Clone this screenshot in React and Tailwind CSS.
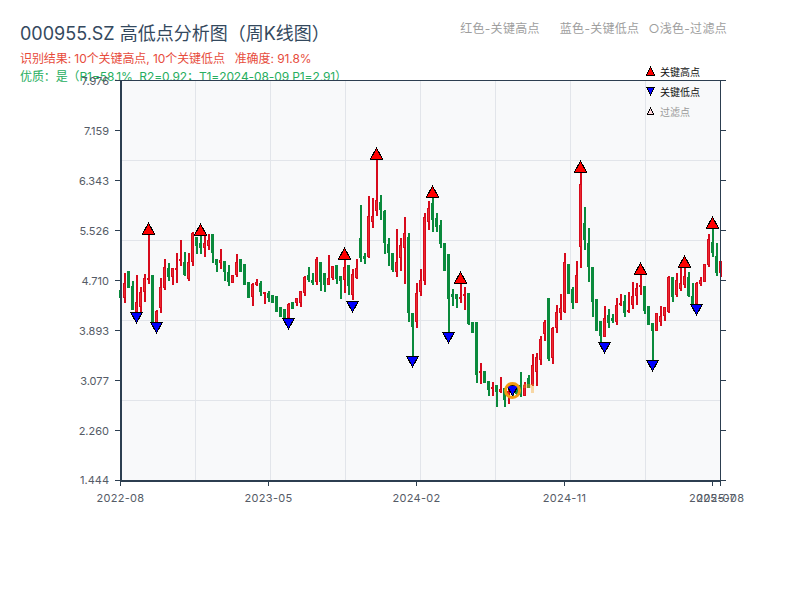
import React from 'react';

// Pixel y values read off the chart: [wickTop, wickBottom, bodyTop, bodyBottom, colour]
const CANDLES = [
  [290,298,290,298,'g'],[273,303,283,298,'r'],[271,288,271,288,'g'],[281,310,286,310,'g'],[275,312,302,312,'r'],
  [287,313,292,307,'r'],[274,302,278,292,'r'],[234,284,278,280,'r'],[275,322,275,322,'g'],[310,323,311,323,'r'],
  [278,313,287,308,'r'],[259,290,267,288,'r'],[263,281,268,277,'g'],[268,285,268,277,'r'],[253,283,268,270,'r'],
  [240,266,259,261,'r'],[252,276,262,275,'g'],[253,281,262,279,'r'],[232,266,233,262,'r'],[237,254,237,246,'g'],
  [235,254,243,248,'g'],[235,257,243,248,'r'],[234,250,240,246,'r'],[234,263,234,253,'g'],[259,272,259,265,'g'],
  [249,269,260,263,'r'],[261,281,261,272,'g'],[265,286,272,282,'g'],[275,283,275,283,'r'],[254,277,262,275,'r'],
  [259,272,259,272,'g'],[264,285,264,285,'g'],[282,298,282,298,'g'],[283,306,284,297,'r'],[279,286,282,285,'r'],
  [281,296,283,292,'g'],[292,304,292,293,'r'],[291,302,293,298,'g'],[295,303,295,303,'g'],[296,312,296,312,'g'],
  [307,317,307,317,'g'],[309,318,309,318,'g'],[303,322,304,318,'r'],[302,309,302,309,'g'],[298,306,298,303,'r'],
  [291,307,291,303,'r'],[276,296,277,293,'r'],[267,282,275,280,'g'],[273,285,280,283,'g'],[257,285,259,282,'r'],
  [262,291,262,282,'g'],[273,292,273,285,'g'],[255,285,278,285,'r'],[266,280,266,278,'r'],[265,284,265,279,'g'],
  [276,299,276,281,'g'],[258,293,267,280,'r'],[265,295,265,286,'g'],[269,300,274,295,'r'],[259,279,268,278,'r'],
  [205,262,238,258,'g'],[253,264,256,259,'g'],[196,258,216,257,'r'],[198,228,216,222,'r'],[160,216,200,211,'r'],
  [195,220,202,210,'g'],[210,254,211,243,'g'],[238,266,244,253,'g'],[253,272,253,270,'g'],[229,277,262,272,'r'],
  [238,271,245,258,'r'],[217,284,233,248,'r'],[233,322,237,313,'g'],[313,356,313,327,'g'],[283,328,293,322,'r'],
  [269,296,280,292,'r'],[213,285,217,281,'r'],[201,230,208,222,'r'],[197,232,203,220,'g'],[213,232,218,227,'g'],
  [220,248,225,244,'g'],[243,271,243,271,'g'],[254,332,254,299,'g'],[289,306,294,297,'g'],[294,308,294,299,'g'],
  [283,303,297,299,'r'],[287,310,294,296,'r'],[293,325,293,324,'g'],[322,333,322,333,'g'],[322,383,322,375,'g'],
  [363,384,371,373,'r'],[371,383,371,383,'g'],[381,396,381,390,'g'],[382,396,387,388,'r'],[385,407,385,392,'g'],
  [377,393,389,392,'r'],[388,407,388,400,'g'],[390,404,391,396,'r'],[385,396,388,394,'g'],[385,395,386,394,'g'],
  [372,397,385,395,'g'],[382,396,385,396,'r'],[375,388,378,388,'g'],[354,386,365,385,'r'],
  [353,386,357,372,'r'],[336,365,339,360,'r'],[320,341,322,334,'r'],[298,361,298,359,'g'],[327,364,328,358,'r'],
  [305,333,312,328,'r'],[294,320,308,313,'r'],[253,313,262,312,'r'],[264,294,264,294,'g'],[287,309,289,303,'g'],
  [261,303,275,303,'r'],[172,268,184,247,'r'],[207,250,223,240,'g'],[228,282,243,267,'g'],[267,317,267,302,'g'],
  [299,331,299,331,'g'],[321,342,321,336,'g'],[306,337,318,337,'r'],[309,328,315,323,'g'],[314,323,318,321,'g'],
  [298,325,305,322,'r'],[294,306,303,305,'r'],[295,317,301,313,'g'],[292,313,310,312,'r'],[282,309,296,305,'r'],
  [283,305,288,296,'r'],[274,295,285,287,'r'],[286,314,286,311,'g'],[306,325,306,325,'g'],[323,360,323,331,'g'],
  [313,331,313,331,'r'],[306,326,316,322,'r'],[307,321,307,316,'r'],[276,313,277,312,'r'],[277,302,277,297,'g'],
  [273,297,280,295,'r'],[267,291,283,289,'r'],[267,288,276,285,'r'],[272,297,277,296,'g'],[283,305,296,305,'g'],
  [282,305,283,304,'r'],[277,286,280,284,'r'],[264,282,264,282,'r'],[234,267,239,265,'r'],[228,257,242,253,'g'],
  [243,276,256,273,'g'],[261,277,261,273,'r'],
];

const PEAKS = [[148.5,234],[200.5,235],[344.5,259],[376.5,159],[432.5,197],[460.5,283],[580.5,172],[640.5,274],[684.5,267],[712.5,228]];
const LOWS = [[136.5,312],[156.5,322],[288.5,318],[352.5,301],[412.5,356],[448.5,332],[512.5,385],[604.5,342],[652.5,360],[696.5,304]];

const Y_LABELS = ['7.976','7.159','6.343','5.526','4.710','3.893','3.077','2.260','1.444'];
const X_LABELS = [[120.5,'2022-08'],[268.5,'2023-05'],[416.5,'2024-02'],[564.5,'2024-11'],[712.5,'2025-07'],[720.5,'2025-08']];
const V_GRID = [195,270,345,420,495,570,645];
const H_GRID = [160,240,320,400];

const AXIS = '#2c3e50';

function Candle({ c, i }) {
  const [top, bottom, bodyTop, bodyBottom, kind] = c;
  const x = 120 + 4 * i;
  const dark = kind === 'r' ? '#d70a1c' : '#0a8a3c';
  const core = kind === 'r' ? '#ea2a30' : '#0a8a3c';
  const h = Math.max(bodyBottom - bodyTop, 2);
  return (
    <g>
      <rect x={x} y={top} width={2} height={bottom - top} fill={dark} />
      <rect x={x - 1} y={bodyTop} width={3} height={h} fill={dark} />
      <rect x={x} y={bodyTop + 1} width={1} height={Math.max(h - 2, 0)} fill={core} />
    </g>
  );
}

function UpMark({ x, y, fill = '#ff0000', size = 6, h = 11 }) {
  return <polygon points={`${x - size},${y} ${x + size},${y} ${x},${y - h}`} fill={fill} stroke="#000" strokeWidth="1" shapeRendering="crispEdges" />;
}

function DownMark({ x, y, fill = '#0000ff', size = 6, h = 11 }) {
  return <polygon points={`${x - size},${y} ${x + size},${y} ${x},${y + h}`} fill={fill} stroke="#000" strokeWidth="1" shapeRendering="crispEdges" />;
}

function Chart() {
  return (
    <svg width="800" height="530" viewBox="0 0 800 530" className="block -mt-[90px] relative" style={{ fontFamily: 'Inter, "Noto Sans CJK SC", sans-serif' }}>
      <rect x="121" y="80" width="600" height="400" fill="#f8f9fa" />
      {V_GRID.map(x => <line key={x} x1={x + 0.5} x2={x + 0.5} y1="81" y2="480" stroke="#e2e5ea" />)}
      {H_GRID.map(y => <line key={y} x1="122" x2="720" y1={y + 0.5} y2={y + 0.5} stroke="#e2e5ea" />)}

      <g shapeRendering="crispEdges">
        {CANDLES.map((c, i) => <Candle key={i} c={c} i={i} />)}
        {/* faded filtered candle beside the marked low */}
        <rect x="523" y="384" width="11" height="4" fill="#f5a623" opacity="0.4" />
        <rect x="531" y="388" width="3" height="5" fill="#f5a623" opacity="0.4" />
      </g>

      {PEAKS.map(([x, y]) => <UpMark key={x} x={x} y={y} />)}
      {LOWS.map(([x, y]) => <DownMark key={x} x={x} y={y} />)}
      <circle cx="512.5" cy="390.5" r="7" fill="none" stroke="#f39c12" strokeWidth="3" />

      {/* axes */}
      <g shapeRendering="crispEdges">
        <rect x="120" y="80" width="2" height="402" fill={AXIS} />
        <rect x="120" y="480" width="601" height="2" fill={AXIS} />
        <rect x="120" y="80" width="606" height="1" fill={AXIS} />
        <rect x="720" y="80" width="1" height="402" fill={AXIS} />
        {Y_LABELS.map((_, i) => (
          <g key={i} fill={AXIS}>
            <rect x="115" y={80 + 50 * i} width="5" height="1" />
            <rect x="721" y={80 + 50 * i} width="5" height="1" />
          </g>
        ))}
        {X_LABELS.map(([x]) => <rect key={x} x={x - 0.5} y="482" width="1" height="4" fill={AXIS} />)}
      </g>
      {Y_LABELS.map((t, i) => (
        <text key={t} x="109" y={81 + 50 * i - (i === 8 ? 1 : 0)} textAnchor="end" dominantBaseline="central" fontSize="11" fill="#555b66">{t}</text>
      ))}
      {X_LABELS.map(([x, t]) => (
        <text key={t} x={x} y="498" textAnchor="middle" dominantBaseline="central" fontSize="11" fill="#555b66" className="tracking-[0.3px]">{t}</text>
      ))}

      {/* legend */}
      <UpMark x={650.5} y={75} size={4} h={8} />
      <DownMark x={650.5} y={87} size={4} h={8} />
      <UpMark x={650.5} y={114} fill="#ffd6dc" size={3} h={6} />
      <text x="660" y="72" dominantBaseline="central" fontSize="10" fill="#111">关键高点</text>
      <text x="660" y="92" dominantBaseline="central" fontSize="10" fill="#111">关键低点</text>
      <text x="660" y="112" dominantBaseline="central" fontSize="10" fill="#999">过滤点</text>
    </svg>
  );
}

export default function App() {
  return (
    <div className="w-[800px] h-[600px] bg-white overflow-hidden font-['Inter','Noto_Sans_CJK_SC',sans-serif]">
      <div className="flex justify-between pl-5 pr-[73px] pt-5 h-[90px]">
        <div>
          <h1 className="text-[18px] leading-[27px] font-normal text-[#34495e]">000955.SZ 高低点分析图（周K线图）</h1>
          <p className="mt-[3px] text-[12px] leading-[18px] text-[#e74c3c] whitespace-pre tracking-[-0.08px]">识别结果: 10个关键高点, 10个关键低点   准确度: 91.8%</p>
          <p className="text-[12px] leading-[18px] text-[#27ae60] whitespace-pre tracking-[-0.1px]">优质：是（R1=58.1%  R2=0.92；T1=2024-08-09 P1=2.91）</p>
        </div>
        <div className="flex gap-5 text-[12px] leading-[18px] text-[#9e9e9e] tracking-[0.3px]">
          <span>红色-关键高点</span>
          <span>蓝色-关键低点</span>
          <span className="-ml-[11px]">○浅色-过滤点</span>
        </div>
      </div>
      <Chart />
    </div>
  );
}
